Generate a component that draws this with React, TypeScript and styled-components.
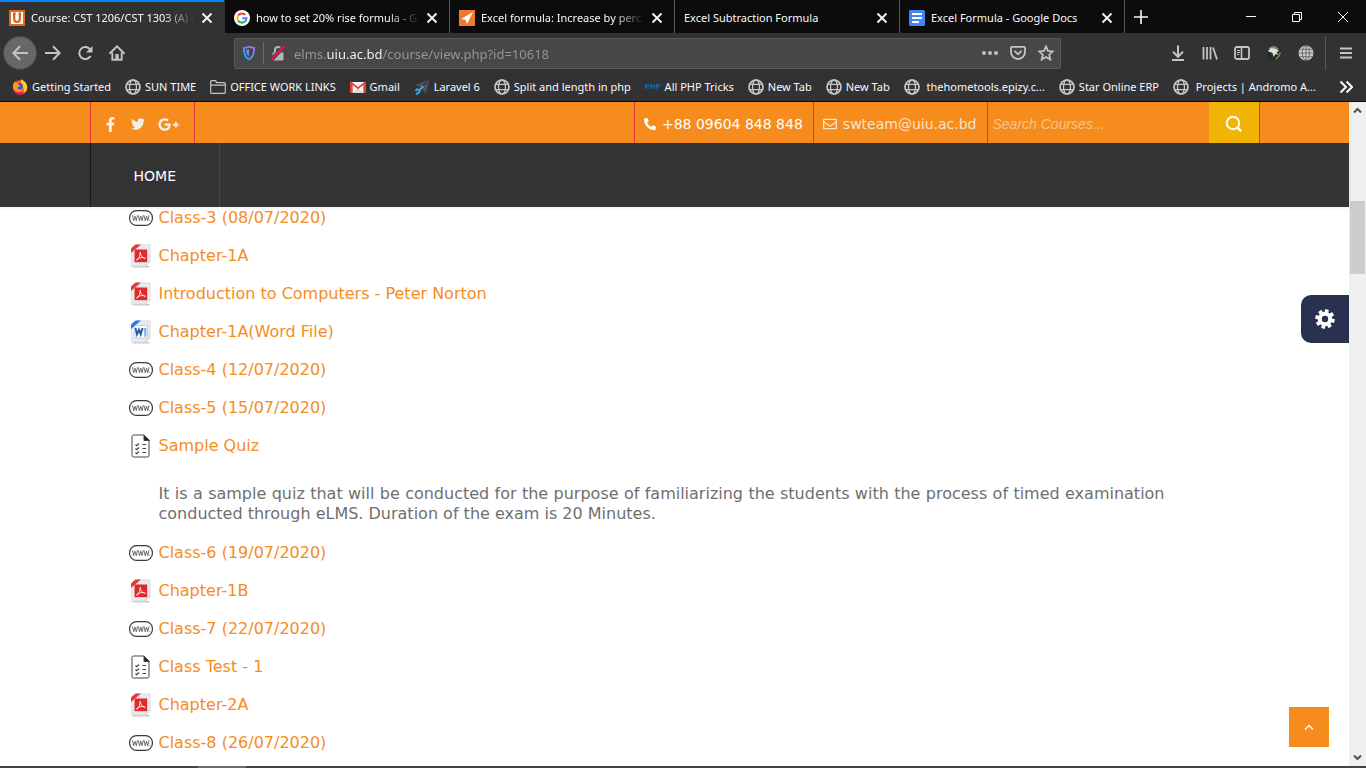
import React from "react";
import styled, { createGlobalStyle } from "styled-components";
import { FaFacebookF, FaTwitter, FaGooglePlusG, FaPhoneAlt, FaRegEnvelope } from "react-icons/fa";

const color = {
  orange: "#f68c1e",
  divider: "#e5333a",
  amber: "#f2b307",
  dark: "#333333",
  chrome: "#323234",
  tabStrip: "#0c0c0d",
  chromeIcon: "#c4c4c5",
};
const uiFont = `"Noto Sans", "Open Sans", sans-serif`;
const siteFont = `"DejaVu Sans", Verdana, sans-serif`;

const GlobalStyle = createGlobalStyle`
  * { box-sizing: border-box; }
  body { margin: 0; background: #fff; }
  button { border: 0; padding: 0; background: none; color: inherit; font: inherit; cursor: pointer; }
  a { color: inherit; text-decoration: none; }
  ul { list-style: none; margin: 0; padding: 0; }
  svg { display: block; flex: none; }
`;

const Shell = styled.div`
  display: flex;
  flex-direction: column;
  min-height: 100vh;
`;

/* Browser frame */
const Chrome = styled.header`
  background: ${color.chrome};
  color: #f9f9fa;
  font: 11px/16px ${uiFont};
  border-bottom: 1px solid #0a0a0b;
`;
const TabStrip = styled.div`
  display: flex;
  height: 33px;
  background: ${color.tabStrip};
`;
const TabItem = styled.div<{ $active?: boolean; $divided?: boolean }>`
  display: flex;
  align-items: center;
  flex: 0 1 225px;
  min-width: 0;
  padding: 2px 9px 0;
  background: ${(p) => (p.$active ? color.chrome : "transparent")};
  box-shadow: ${(p) => (p.$active ? "inset 0 2px #0a84ff" : "none")};
  border-right: 1px solid ${(p) => (p.$divided ? "#58585a" : "transparent")};
`;
const TabButton = styled.button`
  display: flex;
  align-items: center;
  gap: 6px;
  flex: 1;
  min-width: 0;
  height: 100%;
`;
const TabLabel = styled.span<{ $fade?: boolean }>`
  flex: 1;
  overflow: hidden;
  white-space: nowrap;
  text-align: left;
  ${(p) => p.$fade && "mask-image: linear-gradient(to left, transparent, #000 32px);"}
`;
const CloseButton = styled.button`
  margin-left: 4px;
`;
const NewTab = styled.button`
  display: grid;
  place-items: center;
  width: 32px;
`;
const WindowButtons = styled.div`
  display: flex;
  margin-left: auto;
`;
const WindowButton = styled.button`
  display: grid;
  place-items: center;
  width: 46px;
`;
const Toolbar = styled.div`
  display: flex;
  align-items: center;
  height: 40px;
  padding-left: 4px;
  color: ${color.chromeIcon};
`;
const ToolButton = styled.button<{ $round?: boolean }>`
  display: grid;
  place-items: center;
  width: 32px;
  height: 32px;
  border-radius: 50%;
  ${(p) => p.$round && "background: #676769; margin-right: 1px; box-shadow: 0 0 0 1px #464648;"}
`;
const AddressBar = styled.form`
  display: flex;
  align-items: center;
  flex: 1;
  height: 31px;
  margin: 0 101px;
  background: #474749;
  border: 1px solid #5b5b5d;
  border-radius: 2px;
`;
const AddressButton = styled.button`
  display: grid;
  place-items: center;
  width: 28px;
  height: 28px;
`;
const AddressRule = styled.span`
  width: 1px;
  height: 22px;
  background: #68686b;
`;
const AddressInput = styled.input`
  flex: 1;
  min-width: 0;
  margin-left: 2px;
  padding: 1px 0 0;
  border: 0;
  outline: 0;
  font: 13px/20px ${uiFont};
  color: #a0a0a2;
  background: linear-gradient(90deg, #98989a 32px, #f9f9fa 32px, #f9f9fa 88px, #98989a 88px);
  background-clip: text;
  -webkit-text-fill-color: transparent;
`;
const MenuButton = styled.button`
  display: grid;
  place-items: center;
  width: 41px;
  height: 34px;
  margin-left: 3px;
  border-left: 1px solid #58585a;
`;
const BookmarkBar = styled.nav`
  display: flex;
  align-items: center;
  height: 28px;
  padding: 0 13px 0 12px;
`;
const BookmarkList = styled.ul`
  display: flex;
  justify-content: space-between;
  flex: 1;
  margin-right: 23px;
`;
const Bookmark = styled.a`
  display: flex;
  align-items: center;
  gap: 4px;
  white-space: nowrap;
`;

/* Course site */
const Viewport = styled.div`
  display: flex;
  flex: 1;
`;
const Page = styled.div`
  position: relative;
  flex: 1;
  min-width: 0;
  background: #fff;
  font: 16px/20px ${siteFont};
`;
const SiteHeader = styled.header`
  box-shadow: 0 1px 5px rgba(0, 0, 0, 0.07);
`;
const Container = styled.div`
  display: flex;
  max-width: 1170px;
  margin: 0 auto;
`;
const TopBar = styled.div`
  background: ${color.orange};
  color: #f4efe9;
  font-size: 14px;
`;
const TopBarRow = styled(Container)`
  height: 41px;
  border: solid ${color.divider};
  border-width: 0 1px;
`;
const Social = styled.div`
  display: flex;
  align-items: center;
  gap: 13px;
  padding: 3px 15px 0 12px;
  border-right: 1px solid ${color.divider};
`;
const Contacts = styled.div`
  display: flex;
  margin-left: auto;
`;
const Contact = styled.a<{ $bright?: boolean }>`
  display: flex;
  align-items: center;
  gap: 6px;
  padding: 3px 10px 0 9px;
  color: ${(p) => (p.$bright ? "#fff" : "#fbe3c8")};
  border-left: 1px solid ${color.divider};
`;
const SearchForm = styled.form`
  display: flex;
  border-left: 1px solid ${color.divider};
`;
const SearchInput = styled.input`
  width: 221px;
  padding: 3px 5px 0;
  border: 0;
  outline: 0;
  background: none;
  color: #fff;
  font: italic 14px/20px "Liberation Sans", Arial, sans-serif;
  &::placeholder { color: #fac288; opacity: 1; }
`;
const SearchButton = styled.button`
  display: grid;
  place-items: center;
  width: 50px;
  padding-top: 3px;
  background: ${color.amber};
  color: #fff;
`;
const MainNav = styled.nav`
  background: ${color.dark};
  color: #fff;
  font-size: 14px;
`;
const NavRow = styled(Container)`
  height: 64px;
  border-left: 1px solid #1a1a1a;
`;
const NavLink = styled.a`
  display: flex;
  align-items: center;
  padding: 2px 43px 0;
  border-right: 1px solid #464646;
`;
const Course = styled.main`
  max-width: 1170px;
  margin: 0 auto;
  padding: 1px 95px 12px 39px;
`;
const Activities = styled.ul`
  display: flex;
  flex-direction: column;
  gap: 18px;
`;
const ActivityLink = styled.a`
  display: flex;
  align-items: center;
  gap: 6px;
  height: 20px;
  color: ${color.orange};
`;
const Description = styled.p`
  margin: 28px 0 1px;
  padding-left: 30px;
  color: #6f6f6f;
  text-align: justify;
`;
const SettingsButton = styled.button`
  position: absolute;
  top: 193px;
  right: 0;
  display: grid;
  place-items: center;
  width: 48px;
  height: 48px;
  color: #fff;
  background: #283250;
  border-radius: 10px 0 0 10px;
`;
const TopButton = styled.button`
  position: absolute;
  right: 20px;
  bottom: 19px;
  display: grid;
  place-items: center;
  width: 40px;
  height: 40px;
  color: #fff;
  background: ${color.orange};
`;
const ScrollTrack = styled.div`
  display: flex;
  flex-direction: column;
  width: 17px;
  background: #f0f0f0;
  color: #505050;
`;
const ScrollArrow = styled.button`
  display: grid;
  place-items: center;
  height: 17px;
`;
const ScrollThumb = styled.div`
  height: 73px;
  margin: 82px 1px auto;
  background: #cdcdcd;
`;
const Taskbar = styled.footer`
  display: flex;
  height: 2px;
  padding-left: 198px;
  background: #444;
`;
const RunningApp = styled.div`
  width: 48px;
  background: #6c6c6c;
`;

/* Icons */
type LineProps = { size?: number; w?: number; d: string };
const Line = ({ size = 16, w = 2, d }: LineProps) => (
  <svg width={size} height={size} viewBox={`0 0 ${size} ${size}`} fill="none" stroke="currentColor" strokeWidth={w}>
    <path d={d} />
  </svg>
);

const Globe = () => (
  <svg width="16" height="16" viewBox="0 0 16 16" fill="none" stroke="#c6c6c7" strokeWidth="1.3">
    <circle cx="8" cy="8" r="7" strokeWidth="1.7" />
    <ellipse cx="8" cy="8" rx="3.5" ry="7" />
    <path d="M1.8 5.3h12.4M1.8 10.7h12.4" />
  </svg>
);
const SolidGlobe = () => (
  <svg width="16" height="16" viewBox="0 0 16 16" fill="none" stroke="#5c5c5e" strokeWidth="0.8">
    <circle cx="8" cy="8" r="7.5" fill="#c9c9ca" stroke="none" />
    <ellipse cx="8" cy="8" rx="3.6" ry="7.3" />
    <path d="M8 .5v15M.5 8h15M1.8 4.3h12.4M1.8 11.7h12.4" />
  </svg>
);
const UiuLogo = () => (
  <svg width="16" height="16" viewBox="0 0 16 16">
    <path fill="#e8671b" d="M0 0h16v16H0z" />
    <path fill="#fff" d="M2 2h12v12H2z" />
    <path fill="none" stroke="#c9642a" strokeWidth="2.2" d="M5.2 3v6q0 3 2.8 3t2.8-3V3M4 3.6h2.8M9.4 3.6h2.8" />
  </svg>
);
const GoogleLogo = () => (
  <svg width="16" height="16" viewBox="0 0 16 16" fill="none" strokeWidth="2">
    <circle cx="8" cy="8" r="8" fill="#fff" />
    <path stroke="#ea4335" d="M4.1 5.6A4.5 4.5 0 0 1 11.3 4.9" />
    <path stroke="#fbbc05" d="M4.1 10.4a4.6 4.6 0 0 1 0-4.8" />
    <path stroke="#34a853" d="M4.1 10.4a4.5 4.5 0 0 0 6.8 1.2" />
    <path stroke="#4285f4" d="M8.2 8.2h4.3a4.4 4.4 0 0 1-1.6 3.4" />
  </svg>
);
const ExcelJetLogo = () => (
  <svg width="16" height="16" viewBox="0 0 16 16">
    <path fill="#f0792b" d="M0 0h16v16H0z" />
    <path fill="#fff" d="M14 2 2 9l4.5.8L8 14z" />
  </svg>
);
const DocsLogo = () => (
  <svg width="16" height="16" viewBox="0 0 16 16">
    <rect width="16" height="16" rx="1.5" fill="#4285f4" />
    <path stroke="#fff" strokeWidth="2" d="M3 4h10M3 8h10M3 12h7" />
  </svg>
);
const FirefoxLogo = () => (
  <svg width="16" height="16" viewBox="0 0 16 16">
    <circle cx="8" cy="8.5" r="7.2" fill="#ff5a1f" />
    <path fill="#e3195a" d="M1 7c0 5 3 8.7 7 8.7 3 0 5.6-1.700 6.700-4.500-2.700 2.800-8.700 2.300-10.200-2z" />
    <path fill="#ffcb2d" d="M9 .3c4 1.500 6.400 5 6.200 8.800-.2 2.800-2.200 4.700-4.200 5.500 2-3 .5-5-.6-7.200C9.500 5.500 8.300 3 9 .3z" />
    <circle cx="7.600" cy="7.400" r="3.300" fill="#4452c8" />
    <path fill="#ff9b1c" d="M1 7.500C1 4.800 2 3 3.300 2c0 1 .4 1.600 1 2 1-.2 2 0 2.700.5C6 5 6.300 6.400 8.300 6.700 7.500 8 6 7.600 5.500 9c.6 2 3.500 2.300 5 .8-.6 3-3 4-5.400 3.200C2.800 12.300 1 10 1 7.500z" />
  </svg>
);
const FolderIcon = () => (
  <svg width="16" height="16" viewBox="0 0 16 16" fill="none" stroke="#c4c4c5" strokeWidth="1.2">
    <path d="M.7 13.500v-11q0-.9.9-.9h3.900l1.200 2h7.700q.9 0 .9.9v9q0 .9-.9.900H1.600q-.9 0-.9-.9zM.7 6.200h14.600" />
  </svg>
);
const GmailLogo = () => (
  <svg width="16" height="16" viewBox="0 0 16 16">
    <path fill="#f2f2f2" d="M1 3h14v11H1z" />
    <path fill="#d9d9d9" d="m3 14 5-5 5 5z" />
    <path fill="#e0453a" d="M1 2.500q-1 .3-1 1.500v9q0 1 1 1h1.700V6L8 10.200 13.300 6v8H15q1 0 1-1V4q0-1.200-1-1.500L8 8z" />
  </svg>
);
const LaravelLogo = () => (
  <svg width="16" height="16" viewBox="0 0 16 16">
    <path fill="#4b545c" d="M15.500.5 1 6l5 2zM15.500.5 11.500 15 8 9.500z" />
    <path stroke="#39a7e8" strokeWidth="2" fill="none" d="m9.500 7-5 5M4 9.500 1.500 12M6.500 12 2 15.500" />
  </svg>
);
const PhpText = styled.span`
  width: 16px;
  color: #1567a8;
  font: bold 7px/16px "DejaVu Sans", sans-serif;
`;
const ShieldIcon = () => (
  <svg width="14" height="16" viewBox="0 0 14 16">
    <defs>
      <linearGradient id="shield" x1="0" y1="1" x2="1" y2="0">
        <stop offset="0.2" stopColor="#2aa5f5" />
        <stop offset="0.9" stopColor="#a272f2" />
      </linearGradient>
    </defs>
    <path fill="none" stroke="url(#shield)" strokeWidth="1.800" d="M7 1.800 12.200 3c0 5.500-.8 9.300-5.200 11.400C2.600 12.300 1.800 8.500 1.800 3z" />
    <path fill="url(#shield)" d="M7 4.200v7.400C5 10 4.200 8 4.100 4.900z" />
  </svg>
);
const LockIcon = () => (
  <svg width="16" height="16" viewBox="0 0 16 16">
    <path fill="#b4b4b5" d="M2.500 7.500h11v7q0 1-1 1h-9q-1 0-1-1z" />
    <path fill="none" stroke="#b4b4b5" strokeWidth="2" d="M5 8V5a3 3 0 0 1 6 0v3" />
    <path stroke="#474749" strokeWidth="4" d="M1.500 14.500 14.500 1" />
    <path stroke="#ff0a3c" strokeWidth="2" d="M1.500 14.500 14.500 1" />
  </svg>
);
const DotsIcon = () => (
  <svg width="18" height="16" viewBox="0 0 18 16" fill="#c0c0c1">
    <circle cx="3" cy="8" r="2" /><circle cx="9" cy="8" r="2" /><circle cx="15" cy="8" r="2" />
  </svg>
);
const PocketIcon = () => (
  <svg width="16" height="16" viewBox="0 0 16 16" fill="none" stroke="currentColor" strokeWidth="1.8" strokeLinecap="round">
    <path d="M2 1.900h12q1 0 1 1V7a7 7 0 0 1-14 0V2.900q0-1 1-1z" />
    <path d="m5 6.300 3 3 3-3" />
  </svg>
);
const HomeIcon = () => (
  <svg width="16" height="16" viewBox="0 0 16 16" fill="none" stroke="currentColor" strokeWidth="1.9">
    <path strokeLinecap="round" d="M1 8.200 8 1.300l7 6.900" />
    <path d="M3.300 7.500v7.300h9.400V7.500" />
    <path fill="currentColor" stroke="none" d="M6.300 9h3.400v5.500H6.300z" />
  </svg>
);
const ReloadIcon = () => (
  <svg width="16" height="16" viewBox="0 0 16 16" fill="none" stroke="currentColor" strokeWidth="2">
    <path d="M13.300 4.800A6 6 0 1 0 13.500 11" />
    <path fill="currentColor" stroke="none" d="M15.500 1v6.500H9z" />
  </svg>
);
const SidebarIcon = () => (
  <svg width="16" height="16" viewBox="0 0 16 16" fill="none" stroke="currentColor">
    <rect x="1" y="2" width="14" height="12" rx="1.800" strokeWidth="1.800" />
    <path strokeWidth="1.600" d="M7.500 2v12" />
    <path d="M3 5.500h3M3 7.500h3M3 9.500h2" />
  </svg>
);
const BirdIcon = () => (
  <svg width="16" height="16" viewBox="0 0 16 16">
    <circle cx="8" cy="8" r="7.500" fill="#252c22" />
    <path fill="#7d8a72" d="M2 4q6-6 11 0l-3 2-4-2z" />
    <path fill="#dfe0dd" d="m1.500 6 4-3 4 1 4 2-3 1 2 3-3-1-2 3-1-4z" />
    <path fill="none" stroke="#6d9a41" strokeWidth="1.500" d="M14.500 7.500q-1 4-5 7" />
  </svg>
);
const SearchIcon = () => (
  <svg width="18" height="18" viewBox="0 0 18 18" fill="none" stroke="currentColor" strokeWidth="2">
    <circle cx="8" cy="8" r="6.200" />
    <path strokeWidth="2.500" d="m12.300 12.300 4 4" />
  </svg>
);
const GearIcon = () => (
  <svg width="20" height="20" viewBox="-10 -10 20 20" fill="none" stroke="currentColor">
    <circle r="5.200" strokeWidth="4" />
    {[12, 57, 102, 147, 192, 237, 282, 327].map((angle) => (
      <path key={angle} strokeWidth="3.800" d="M0-6.500v-3.200" transform={`rotate(${angle})`} />
    ))}
  </svg>
);

type Kind = "www" | "pdf" | "word" | "quiz";
const WwwIcon = () => (
  <svg width="24" height="24" viewBox="0 0 24 24" fill="none" stroke="#3a3a3a">
    <rect x="0.600" y="4.600" width="22.800" height="14.800" rx="7" strokeWidth="1.200" />
    <path strokeWidth="0.700" d="m3.500 9.300 1.200 5.400L6 10.200l1.300 4.500 1.200-5.400M9.300 9.300l1.200 5.400 1.300-4.500 1.300 4.500 1.200-5.400M15 9.300l1.200 5.400 1.300-4.500 1.200 4.500L20 9.300M20.400 14.600h.9" />
  </svg>
);
const QuizIcon = () => (
  <svg width="24" height="24" viewBox="0 0 24 24" fill="none" stroke="#444">
    <path d="M15 1H4.500Q3 1 3 2.500v19Q3 23 4.500 23h14q1.500 0 1.500-1.500V6.500z" />
    <path fill="#222" d="M15 1v5.500h5.500z" />
    <path strokeWidth="1.200" d="m6.500 10.500 1.200 1.200 2.300-2.200M6.500 14.500l1.200 1.200 2.300-2.200M6.500 18.500l1.200 1.200 2.300-2.200M13.500 10.500h3.500M13.500 14.500h3.500M13.500 18.500h3.500" />
  </svg>
);
const FileSheet = ({ accent, children }: { accent: string; children: React.ReactNode }) => (
  <svg width="24" height="24" viewBox="0 0 24 24">
    <path fill="#c8c8c8" d="M3 22h18l-1 1.500H4z" />
    <path fill="#e9eaef" stroke="#d3d4da" strokeWidth="0.600" d="M8 .8h13.200v17l-4.800 4.400H2.600V7z" />
    <path fill="#fafafa" stroke="#bfc0c8" strokeWidth="0.600" d="M21.200 17.800h-3.600l-1.200 4.400z" />
    <path fill={accent} d="M6.500.5H12L2 9V5.500q0-1.500 1-2z" />
    {children}
  </svg>
);
const PdfIcon = () => (
  <FileSheet accent="#e33a33">
    <path fill="#e02a2a" d="M5.500 5.500h12.700v12.700H5.500z" />
    <path fill="none" stroke="#fff" strokeWidth="0.800" d="M7.500 16.300q-.2-1.300 3-2.300 4-1.300 6 .2M8 16.500q3.300-2.700 3.300-8.500M11 8.500q.5 4.500 4.800 6.200" />
  </FileSheet>
);
const WordIcon = () => (
  <FileSheet accent="#1f7fdc">
    <path fill="#fff" stroke="#a9c4e6" strokeWidth="0.700" d="M6 5.500h12.500v12.500H6z" />
    <path fill="#8db4e4" d="M14.500 8h3v8l-2 1.500z" />
    <path fill="none" stroke="#1c54a8" strokeWidth="1.800" d="m6.500 8 1.500 6.500 2-5 1.700 5 1.800-6.500" />
  </FileSheet>
);
const kindIcon: Record<Kind, React.ReactNode> = {
  www: <WwwIcon />,
  pdf: <PdfIcon />,
  word: <WordIcon />,
  quiz: <QuizIcon />,
};

const tabs = [
  { label: "Course: CST 1206/CST 1303 (A) :", icon: <UiuLogo />, active: true, fade: true },
  { label: "how to set 20% rise formula - G", icon: <GoogleLogo />, divided: true, fade: true },
  { label: "Excel formula: Increase by perc", icon: <ExcelJetLogo />, divided: true, fade: true },
  { label: "Excel Subtraction Formula", divided: true },
  { label: "Excel Formula - Google Docs", icon: <DocsLogo />, divided: true },
];

const bookmarks: { label: string; icon: React.ReactNode }[] = [
  { label: "Getting Started", icon: <FirefoxLogo /> },
  { label: "SUN TIME", icon: <Globe /> },
  { label: "OFFICE WORK LINKS", icon: <FolderIcon /> },
  { label: "Gmail", icon: <GmailLogo /> },
  { label: "Laravel 6", icon: <LaravelLogo /> },
  { label: "Split and length in php", icon: <Globe /> },
  { label: "All PHP Tricks", icon: <PhpText>PHP</PhpText> },
  { label: "New Tab", icon: <Globe /> },
  { label: "New Tab", icon: <Globe /> },
  { label: "\u00a0thehometools.epizy.c...", icon: <Globe /> },
  { label: "Star Online ERP", icon: <Globe /> },
  { label: "\u00a0Projects | Andromo A...", icon: <Globe /> },
];

const activities: { kind: Kind; title: string; text?: string }[] = [
  { kind: "www", title: "Class-3 (08/07/2020)" },
  { kind: "pdf", title: "Chapter-1A" },
  { kind: "pdf", title: "Introduction to Computers - Peter Norton" },
  { kind: "word", title: "Chapter-1A(Word File)" },
  { kind: "www", title: "Class-4 (12/07/2020)" },
  { kind: "www", title: "Class-5 (15/07/2020)" },
  {
    kind: "quiz",
    title: "Sample Quiz",
    text: "It is a sample quiz that will be conducted for the purpose of familiarizing the students with the process of timed examination conducted through eLMS. Duration of the exam is 20 Minutes.",
  },
  { kind: "www", title: "Class-6 (19/07/2020)" },
  { kind: "pdf", title: "Chapter-1B" },
  { kind: "www", title: "Class-7 (22/07/2020)" },
  { kind: "quiz", title: "Class Test - 1" },
  { kind: "pdf", title: "Chapter-2A" },
  { kind: "www", title: "Class-8 (26/07/2020)" },
];

function BrowserChrome() {
  return (
    <Chrome>
      <TabStrip>
        {tabs.map((t) => (
          <TabItem key={t.label} $active={t.active} $divided={t.divided}>
            <TabButton>
              {t.icon}
              <TabLabel $fade={t.fade}>{t.label}</TabLabel>
            </TabButton>
            <CloseButton aria-label="Close tab"><Line w={1.8} d="M3.500 3.500l9 9M12.500 3.500l-9 9" /></CloseButton>
          </TabItem>
        ))}
        <NewTab aria-label="New tab"><Line w={1.6} d="M8 1v14M1 8h14" /></NewTab>
        <WindowButtons>
          <WindowButton aria-label="Minimize"><Line size={10} w={1} d="M0 4.500h10" /></WindowButton>
          <WindowButton aria-label="Restore"><Line size={10} w={1} d="M.5 2.500h7v7h-7zM2.500 2.500v-2h7v7h-2" /></WindowButton>
          <WindowButton aria-label="Close"><Line size={10} w={1} d="M0 0l10 10M10 0L0 10" /></WindowButton>
        </WindowButtons>
      </TabStrip>
      <Toolbar>
        <ToolButton $round aria-label="Back"><Line w={2} d="M16 8H1.500M8 1.300L1.400 8 8 14.700" /></ToolButton>
        <ToolButton aria-label="Forward"><Line w={2} d="M0 8h14.500M8 1.300L14.600 8 8 14.700" /></ToolButton>
        <ToolButton aria-label="Reload"><ReloadIcon /></ToolButton>
        <ToolButton aria-label="Home"><HomeIcon /></ToolButton>
        <AddressBar onSubmit={(e) => e.preventDefault()}>
          <AddressButton type="button" aria-label="Tracking protection"><ShieldIcon /></AddressButton>
          <AddressRule />
          <AddressButton type="button" aria-label="Connection"><LockIcon /></AddressButton>
          <AddressInput aria-label="Address" defaultValue="elms.uiu.ac.bd/course/view.php?id=10618" />
          <AddressButton type="button" aria-label="Page actions"><DotsIcon /></AddressButton>
          <AddressButton type="button" aria-label="Save to Pocket"><PocketIcon /></AddressButton>
          <AddressButton type="button" aria-label="Bookmark this page">
            <Line w={1.7} d="M8 1.400l2 4.500 4.900.5-3.700 3.300 1.100 4.900L8 12.100l-4.300 2.500 1.100-4.900L1.100 6.400 6 5.900z" />
          </AddressButton>
        </AddressBar>
        <ToolButton aria-label="Downloads"><Line w={2} d="M8 .5v11M3 6.800l5 5 5-5M2 15h12" /></ToolButton>
        <ToolButton aria-label="Library"><Line w={1.8} d="M1.500 2v12.500M5 2v12.500M8.500 2v12.500M11 2.500l4 12" /></ToolButton>
        <ToolButton aria-label="Sidebars"><SidebarIcon /></ToolButton>
        <ToolButton aria-label="Extension"><BirdIcon /></ToolButton>
        <ToolButton aria-label="Web extension"><SolidGlobe /></ToolButton>
        <MenuButton aria-label="Menu"><Line size={14} w={2} d="M1 2.500h12M1 7h12M1 11.500h12" /></MenuButton>
      </Toolbar>
      <BookmarkBar>
        <BookmarkList>
          {bookmarks.map((b, i) => (
            <li key={i}><Bookmark href="#">{b.icon}{b.label}</Bookmark></li>
          ))}
        </BookmarkList>
        <button aria-label="More bookmarks"><Line size={14} w={2} d="M1.500 1.500L7 7l-5.500 5.500M7.500 1.500L13 7l-5.500 5.500" /></button>
      </BookmarkBar>
    </Chrome>
  );
}

export default function App() {
  return (
    <Shell>
      <GlobalStyle />
      <BrowserChrome />
      <Viewport>
        <Page>
          <SiteHeader>
            <TopBar>
              <TopBarRow>
                <Social>
                  <a href="#" aria-label="Facebook"><FaFacebookF size={15} /></a>
                  <a href="#" aria-label="Twitter"><FaTwitter size={14} /></a>
                  <a href="#" aria-label="Google Plus"><FaGooglePlusG size={21} /></a>
                </Social>
                <Contacts>
                  <Contact href="tel:+8809604848848" $bright><FaPhoneAlt size={12} />+88 09604 848 848</Contact>
                  <Contact href="mailto:swteam@uiu.ac.bd"><FaRegEnvelope size={14} />swteam@uiu.ac.bd</Contact>
                  <SearchForm onSubmit={(e) => e.preventDefault()}>
                    <SearchInput aria-label="Search Courses" placeholder="Search Courses..." />
                    <SearchButton aria-label="Search"><SearchIcon /></SearchButton>
                  </SearchForm>
                </Contacts>
              </TopBarRow>
            </TopBar>
            <MainNav>
              <NavRow><NavLink href="#">HOME</NavLink></NavRow>
            </MainNav>
          </SiteHeader>
          <Course>
            <Activities>
              {activities.map((a) => (
                <li key={a.title}>
                  <ActivityLink href="#">{kindIcon[a.kind]}{a.title}</ActivityLink>
                  {a.text && <Description>{a.text}</Description>}
                </li>
              ))}
            </Activities>
          </Course>
          <SettingsButton aria-label="Settings"><GearIcon /></SettingsButton>
          <TopButton aria-label="Back to top"><Line size={12} w={1.5} d="M2 8.500l4-4 4 4" /></TopButton>
        </Page>
        <ScrollTrack>
          <ScrollArrow aria-label="Scroll up"><Line size={9} w={2} d="M1 6.500L4.500 3 8 6.500" /></ScrollArrow>
          <ScrollThumb />
          <ScrollArrow aria-label="Scroll down"><Line size={9} w={2} d="M1 2.500L4.500 6 8 2.500" /></ScrollArrow>
        </ScrollTrack>
      </Viewport>
      <Taskbar><RunningApp /></Taskbar>
    </Shell>
  );
}
